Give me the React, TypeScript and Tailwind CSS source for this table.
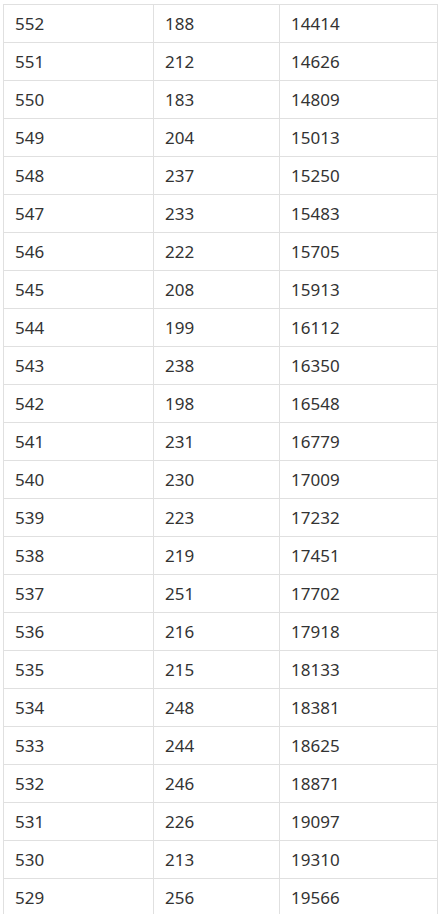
import React from "react";

const rows: [number, number, number][] = [
  [552, 188, 14414],
  [551, 212, 14626],
  [550, 183, 14809],
  [549, 204, 15013],
  [548, 237, 15250],
  [547, 233, 15483],
  [546, 222, 15705],
  [545, 208, 15913],
  [544, 199, 16112],
  [543, 238, 16350],
  [542, 198, 16548],
  [541, 231, 16779],
  [540, 230, 17009],
  [539, 223, 17232],
  [538, 219, 17451],
  [537, 251, 17702],
  [536, 216, 17918],
  [535, 215, 18133],
  [534, 248, 18381],
  [533, 244, 18625],
  [532, 246, 18871],
  [531, 226, 19097],
  [530, 213, 19310],
  [529, 256, 19566],
];

export default function App() {
  return (
    <div className="bg-white pl-[3px] pt-[4px] h-[914px] overflow-hidden" style={{ fontFamily: '"Noto Sans", sans-serif' }}>
      <table className="border-collapse text-[17px] text-[#333]">
        <tbody>
          {rows.map((r) => (
            <tr key={r[0]} className="h-[38px]">
              <td className="w-[150px] border border-[#e0e0e0] px-[11px] leading-none">{r[0]}</td>
              <td className="w-[126px] border border-[#e0e0e0] px-[11px] leading-none">{r[1]}</td>
              <td className="w-[158px] border border-[#e0e0e0] px-[11px] leading-none">{r[2]}</td>
            </tr>
          ))}
        </tbody>
      </table>
    </div>
  );
}
